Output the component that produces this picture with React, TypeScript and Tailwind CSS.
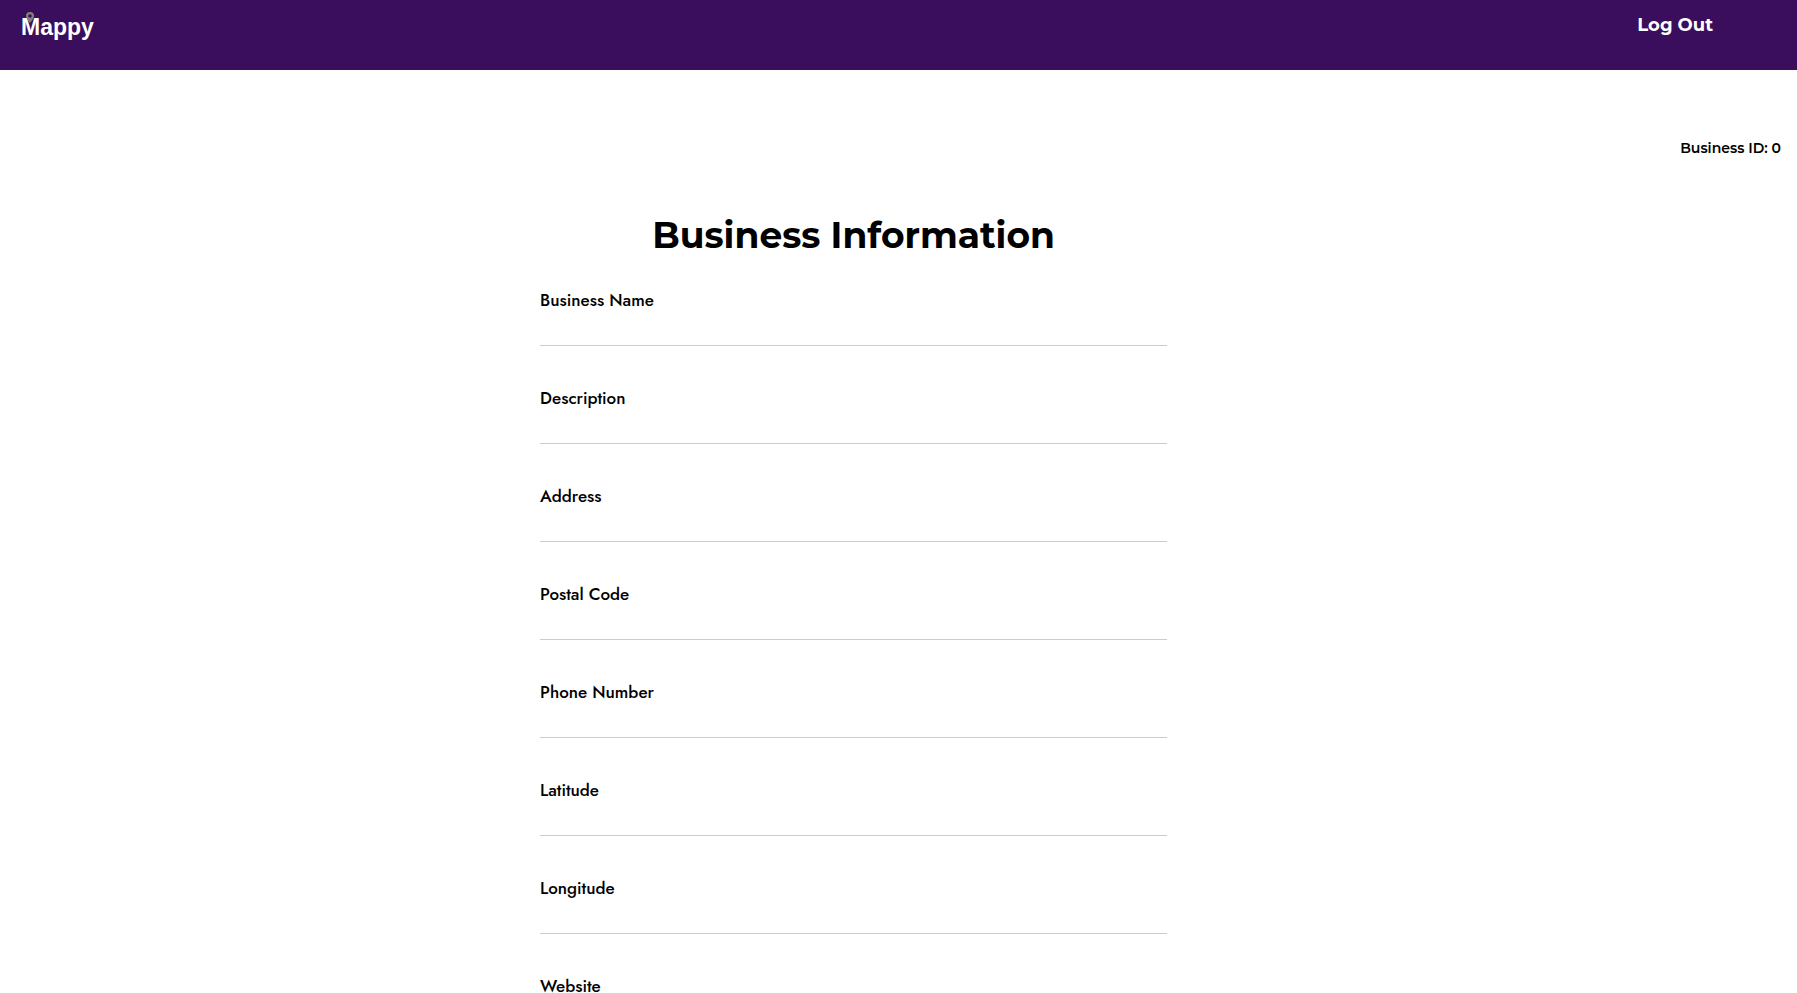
const fields = [
  { id: "name", label: "Business Name" },
  { id: "description", label: "Description" },
  { id: "address", label: "Address" },
  { id: "postal-code", label: "Postal Code" },
  { id: "phone", label: "Phone Number" },
  { id: "latitude", label: "Latitude" },
  { id: "longitude", label: "Longitude" },
  { id: "website", label: "Website" },
];

function Logo() {
  return (
    <a href="#" className="relative font-['Liberation_Sans',sans-serif] text-[23px] leading-7 font-bold text-white">
      Mappy
      <svg
        viewBox="0 0 8 11"
        aria-hidden="true"
        className="absolute -top-px left-[5px] h-[11px] w-2"
      >
        <path
          fill="#858079"
          fillRule="evenodd"
          d="M4 0a4 4 0 0 1 4 4c0 2.600-2.200 4.600-4 7C2.200 8.600 0 6.600 0 4a4 4 0 0 1 4-4Zm0 2.200a1.800 1.800 0 1 0 0 3.600 1.800 1.800 0 0 0 0-3.600Z"
        />
      </svg>
    </a>
  );
}

export default function App() {
  return (
    <div className="min-h-screen bg-white font-['Montserrat','Inter',sans-serif] text-black [scrollbar-width:none]">
      <header className="flex h-[70px] items-start justify-between bg-[#3a0e5c] pt-[13px] pr-[84px] pl-[21px]">
        <Logo />
        <button type="button" className="text-lg leading-6 font-bold text-white">
          Log Out
        </button>
      </header>
      <main>
        <p className="pt-[68px] pr-4 text-right text-sm leading-5 font-semibold">Business ID: 0</p>
        <form className="ml-[30%] w-[35%] px-px pt-[55px]">
          <h1 className="mb-[31px] text-center text-4xl leading-[44px] font-bold whitespace-nowrap">
            Business Information
          </h1>
          <div className="flex flex-col gap-10">
            {fields.map((field) => (
              <div key={field.id} className="flex flex-col">
                <label
                  htmlFor={field.id}
                  className="font-['Jost','Lato',sans-serif] text-[17px] leading-6 font-medium"
                >
                  {field.label}
                </label>
                <input
                  id={field.id}
                  name={field.id}
                  type="text"
                  className="h-[34px] w-full border-b border-[#cccccc] bg-transparent outline-none"
                />
              </div>
            ))}
          </div>
        </form>
      </main>
    </div>
  );
}
